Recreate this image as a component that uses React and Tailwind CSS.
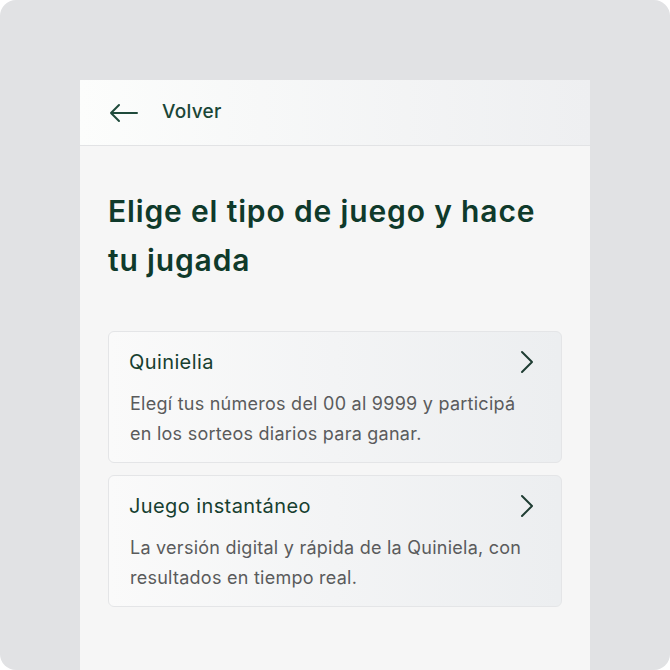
import React from "react";

const Chevron = () => (
  <svg width="16" height="24" viewBox="0 0 16 24" fill="none" stroke="#1f3d33" strokeWidth="2" strokeLinecap="round" strokeLinejoin="round" className="mr-[2px]">
    <path d="M3 2 L13 12 L3 22" />
  </svg>
);

const Card = ({ title, desc }) => (
  <div className="rounded-md border border-[#e4e5e7] bg-gradient-to-r from-[#fafafa] to-[#eceef0] pl-[20px] pr-[24px] pt-[17px] pb-[13px]">
    <div className="flex items-center justify-between h-[26px]">
      <div className="text-[20px] leading-[26px] tracking-[0.4px] text-[#173f30]">{title}</div>
      <Chevron />
    </div>
    <div className="mt-[14px] pl-[1px] text-[18px] leading-[30px] tracking-[0.25px] text-[#5a5b5c]">{desc}</div>
  </div>
);

export default function App() {
  return (
    <div className="w-[670px] h-[670px] bg-white" style={{ fontFamily: "Inter, 'Noto Sans', sans-serif" }}>
      <div className="w-[670px] h-[670px] rounded-2xl bg-[#e1e2e4] pt-[80px] px-[80px] overflow-hidden">
        <div className="h-[590px] bg-[#f6f6f6]">
          <div className="h-[66px] flex items-center pl-[29px] border-b border-[#e2e3e5] bg-gradient-to-r from-[#fcfdfc] to-[#eeeff1]">
            <svg width="30" height="20" viewBox="0 0 30 20" fill="none" stroke="#1f4a3b" strokeWidth="2" strokeLinecap="round" strokeLinejoin="round">
              <path d="M28 10 H2 M10 2 L2 10 L10 18" />
            </svg>
            <span className="ml-[23px] text-[19px] tracking-[0.3px] text-[#1b4637] font-medium">Volver</span>
          </div>
          <div className="px-[28px] pt-[41px]">
            <h1 className="text-[30px] leading-[49px] tracking-[0.85px] font-semibold text-[#0f3a2b]">Elige el tipo de juego y hace tu jugada</h1>
            <div className="mt-[46px] flex flex-col gap-[12px]">
              <Card title="Quinielia" desc="Elegí tus números del 00 al 9999 y participá en los sorteos diarios para ganar." />
              <Card title="Juego instantáneo" desc="La versión digital y rápida de la Quiniela, con resultados en tiempo real." />
            </div>
          </div>
        </div>
      </div>
    </div>
  );
}
